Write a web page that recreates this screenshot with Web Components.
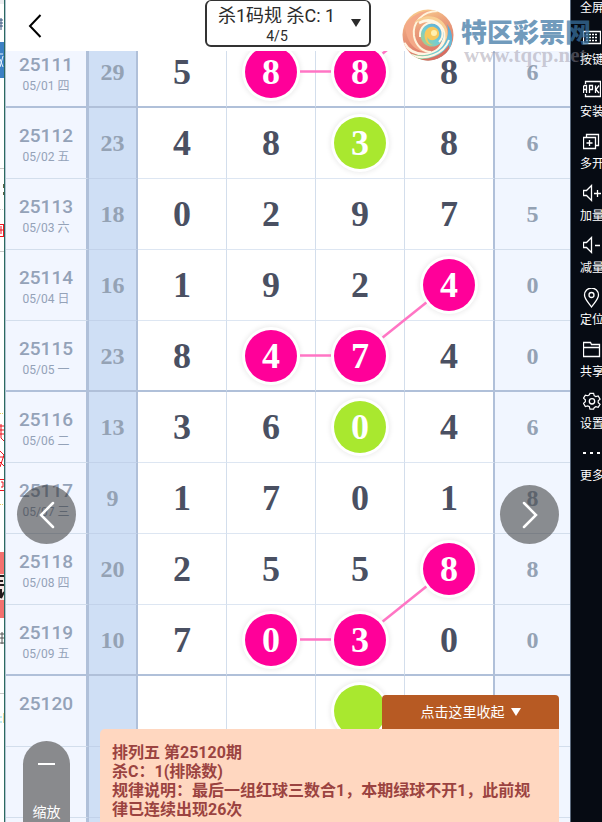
<!DOCTYPE html>
<html lang="zh-CN">
<head>
<meta charset="utf-8">
<meta name="viewport" content="width=device-width, initial-scale=1">
<title>排列五 走势</title>
<style>
  body {
    margin: 0;
    background: #fff;
    font-family: Roboto, "Noto Sans CJK SC", sans-serif;
  }
</style>
</head>
<body>
<trend-app></trend-app>

<script>
// strip of the desktop window that shows left of the emulator
class DesktopEdge extends HTMLElement {
  constructor() {
    super();
    this.attachShadow({ mode: 'open' });
  }

  connectedCallback() {
    this.shadowRoot.innerHTML = `
      <style>
        :host {
          display: block;
          flex: none;
          width: 4px;
          overflow: hidden;
          background: #fff;
          border-right: 1px solid #2b6a60;
        }
        svg { display: block; }
      </style>
      <svg width="4" height="822" viewBox="0 0 4 822" fill="none" aria-hidden="true">
        <path d="M0 0h4v4H0z" fill="#eceef1"/>
        <path d="M0 20h3M0 23h3M0 26h3M1 18v12" stroke="#35557f"/>
        <path d="M0 42h4v36H0z" fill="#3c80c4"/>
        <path d="M0 54h3M0 59l3 8M3 56l-3 11" stroke="#e8f3ff"/>
        <path d="M0 168.500h4M0 251.500h4M0 693.500h4" stroke="#c9c9c9"/>
        <path d="M3.500 184v4M3.500 192v3" stroke="#5d6145"/>
        <path d="M0 224.500h4M0 236.500h4M3.500 224v13M0 230h3M1 226v8" stroke="#f01420"/>
        <path d="M0 209.500h4" stroke="#cfcfcf" stroke-dasharray="1 1"/>
        <path d="M0 413.500h4M0 504.500h4" stroke="#e8c95c" stroke-dasharray="1 1"/>
        <path d="M0 426h4M0 430h4M0 434h4M1 424v14l3 3M0 451l4 4-4 12M0 457h4M0 462l4 4M0 479.500h4M0 490.500h4M1 482h2v5H1" stroke="#ee1520"/>
        <path d="M0 552h4v66H0z" fill="#f4716f"/>
        <path d="M0 574h4v26H0z" fill="#f7e6e4"/>
        <path d="M0 576h4M0 581h3M0 585h4M1 589v9l3-6" stroke="#221a1c" stroke-width="2"/>
        <path d="M0 634h4M0 638h4M0 643h4M2 632v12" stroke="#555"/>
        <path d="M0 717h2M0 722h2" stroke="#7fdcec"/>
        <path d="M3.500 713v10" stroke="#ecd79a"/>
      </svg>
    `;
  }
}

// top bar: back button and the rule picker
class TrendHeader extends HTMLElement {
  constructor() {
    super();
    this.attachShadow({ mode: 'open' });
  }

  connectedCallback() {
    this.shadowRoot.innerHTML = `
      <style>
        :host {
          display: grid;
          grid-template-columns: 1fr auto 1fr;
          align-items: start;
          height: 51px;
          background: #fff;
          position: relative;
          z-index: 1;
        }
        button {
          width: 48px;
          height: 51px;
          margin-left: 5px;
          padding: 0;
          border: 0;
          background: none;
        }
        button svg { display: block; margin: 0 auto; }
        .picker {
          display: grid;
          grid-template-columns: auto 12px;
          align-items: center;
          box-sizing: border-box;
          width: 166px;
          height: 47px;
          padding: 0 6px 0 11px;
          justify-content: space-between;
          border: 2px solid #333;
          border-top-width: 1px;
          border-radius: 6px;
          color: #2b2b2b;
          text-align: center;
        }
        select {
          display: block;
          appearance: none;
          margin: 0;
          padding: 0;
          border: 0;
          background: none;
          color: inherit;
          font: 18px/26px Roboto, "Noto Sans CJK SC", sans-serif;
        }
        .page { display: block; font-size: 14px; line-height: 14px; }
      </style>
      <button type="button" aria-label="返回">
        <svg width="14" height="24" viewBox="0 0 14 24" fill="none" stroke="#000" stroke-width="2">
          <path d="M12.500 1L2 12l10.500 11"/>
        </svg>
      </button>
      <label class="picker">
        <span>
          <select aria-label="规律">
            <option>杀1码规 杀C: 1</option>
          </select>
          <span class="page">4/5</span>
        </span>
        <svg width="10" height="8" viewBox="0 0 10 8" aria-hidden="true"><path d="M0 0h10L5 8z" fill="#2b2b2b"/></svg>
      </label>
    `;
  }
}

// coloured ball around a drawn digit, kind="red" or kind="green"
class NumberBall extends HTMLElement {
  constructor() {
    super();
    this.attachShadow({ mode: 'open' });
  }

  connectedCallback() {
    this.shadowRoot.innerHTML = `
      <style>
        :host {
          display: flex;
          align-items: center;
          justify-content: center;
          width: 52px;
          height: 52px;
          margin: 0 auto;
          border-radius: 50%;
          color: #fff;
          background: #ff0099;
          box-shadow: 0 0 0 3px #fff, 0 0 5px 4px rgba(0, 0, 0, .08);
        }
        :host([kind="green"]) { background: #a9e82f; }
      </style>
      <slot></slot>
    `;
  }
}

// link is [columns, rows] to the next red ball
const ROWS = [
  { issue: '25111', date: '05/01 四', sum: 29, nums: [5, 8, 8, 8], last: 6, red: { 1: [1, 0], 2: [1, -1] }, end: true },
  { issue: '25112', date: '05/02 五', sum: 23, nums: [4, 8, 3, 8], last: 6, green: 2 },
  { issue: '25113', date: '05/03 六', sum: 18, nums: [0, 2, 9, 7], last: 5 },
  { issue: '25114', date: '05/04 日', sum: 16, nums: [1, 9, 2, 4], last: 0, red: { 3: null } },
  { issue: '25115', date: '05/05 一', sum: 23, nums: [8, 4, 7, 4], last: 0, red: { 1: [1, 0], 2: [1, -1] }, end: true },
  { issue: '25116', date: '05/06 二', sum: 13, nums: [3, 6, 0, 4], last: 6, green: 2 },
  { issue: '25117', date: '05/07 三', sum: 9, nums: [1, 7, 0, 1], last: 8 },
  { issue: '25118', date: '05/08 四', sum: 20, nums: [2, 5, 5, 8], last: 8, red: { 3: null } },
  { issue: '25119', date: '05/09 五', sum: 10, nums: [7, 0, 3, 0], last: 0, red: { 1: [1, 0], 2: [1, -1] }, end: true },
  { issue: '25120', date: '', sum: '', nums: ['', '', '', ''], last: '', green: 2 },
  { issue: '', date: '', sum: '', nums: ['', '', '', ''], last: '' },
  { issue: '', date: '', sum: '', nums: ['', '', '', ''], last: '' },
];

class TrendTable extends HTMLElement {
  constructor() {
    super();
    this.attachShadow({ mode: 'open' });
  }

  connectedCallback() {
    this.render();
    this.drawLinks();
    new ResizeObserver(() => this.drawLinks()).observe(this);
  }

  cell(row, value, i) {
    if (row.red && i in row.red) {
      const link = row.red[i] ? `data-link="${row.red[i]}"` : '';
      return `<td><number-ball kind="red" ${link}>${value}</number-ball></td>`;
    }
    if (row.green === i) {
      return `<td><number-ball kind="green">${value}</number-ball></td>`;
    }
    return `<td>${value}</td>`;
  }

  drawLinks() {
    const svg = this.shadowRoot.querySelector('.links');
    const base = svg.getBoundingClientRect();
    const gap = 29;
    let lines = '';
    this.shadowRoot.querySelectorAll('[data-link]').forEach((ball) => {
      const box = ball.getBoundingClientRect();
      const td = ball.parentElement.getBoundingClientRect();
      const [cols, rows] = ball.dataset.link.split(',').map(Number);
      const x = box.left + box.width / 2 - base.left;
      const y = box.top + box.height / 2 - base.top;
      const dx = cols * td.width;
      const dy = rows * td.height;
      const len = Math.hypot(dx, dy);
      const ox = (dx / len) * gap;
      const oy = (dy / len) * gap;
      lines += `<line x1="${x + ox}" y1="${y + oy}" x2="${x + dx - ox}" y2="${y + dy - oy}"/>`;
    });
    svg.innerHTML = lines;
  }

  render() {
    const rows = ROWS.map((row) => `
      <tr class="${row.end ? 'end' : ''}">
        <th scope="row"><span class="issue">${row.issue}</span><span class="date">${row.date}</span></th>
        <td class="sum">${row.sum}</td>
        ${row.nums.map((n, i) => this.cell(row, n, i)).join('')}
        <td class="last">${row.last}</td>
      </tr>`).join('');

    this.shadowRoot.innerHTML = `
      <style>
        :host {
          display: block;
          position: relative;
          margin-top: -14px;
        }
        table {
          width: 100%;
          table-layout: fixed;
          border-collapse: separate;
          border-spacing: 0;
          background: #fff;
        }
        td, th {
          box-sizing: border-box;
          height: 71px;
          padding: 0;
          border-right: 1px solid #d3deec;
          border-bottom: 1px solid #dde6f2;
          text-align: center;
        }
        td {
          color: #4a5062;
          font: bold 36px/40px "Liberation Serif", serif;
        }
        th {
          padding-top: 16px;
          vertical-align: top;
          background: #f2f6ff;
          border-right: 3px solid #b0c0d9;
          border-bottom-color: #d3deec;
          color: #94a2b8;
          font-weight: 500;
        }
        .issue { display: block; font-size: 19px; line-height: 24px; }
        .date { display: block; font-size: 12px; font-weight: 400; line-height: 18px; }
        td.sum, td.last {
          color: #94a2b4;
          font-size: 24px;
        }
        td.sum {
          background: #cfdff5;
          border-right: 2px solid #b0c0d9;
          border-bottom-color: #c2d2ea;
        }
        td.last {
          background: #f1f6ff;
          border-right: 0;
          border-bottom-color: #d3deec;
        }
        td:nth-child(6) { border-right: 2px solid #b0c0d9; }
        tr.end > td, tr.end > th { border-bottom: 2px solid #b0c0d9; }
        .links {
          position: absolute;
          inset: 0;
          width: 100%;
          height: 100%;
          stroke: #ff75c4;
          stroke-width: 2.5;
        }
      </style>
      <table>
        <colgroup>
          <col style="width: 83px"><col style="width: 49px">
          <col style="width: 89px"><col style="width: 89px"><col style="width: 89px"><col style="width: 90px">
          <col style="width: 75px">
        </colgroup>
        <tbody>${rows}</tbody>
      </table>
      <svg class="links" aria-hidden="true"></svg>
    `;
  }
}

class RoundNav extends HTMLElement {
  constructor() {
    super();
    this.attachShadow({ mode: 'open' });
  }

  connectedCallback() {
    const next = this.getAttribute('dir') === 'next';
    this.shadowRoot.innerHTML = `
      <style>
        :host { display: block; }
        button {
          display: flex;
          align-items: center;
          justify-content: center;
          width: 59px;
          height: 59px;
          padding: 0;
          border: 0;
          border-radius: 50%;
          background: rgba(45, 45, 45, .53);
        }
      </style>
      <button type="button" aria-label="${next ? '下一个' : '上一个'}">
        <svg width="16" height="28" viewBox="0 0 16 28" fill="none" stroke="#fff" stroke-width="2.500" stroke-linecap="round">
          <path d="${next ? 'M2 2l12 12L2 26' : 'M14 2L2 14l12 12'}"/>
        </svg>
      </button>
    `;
  }
}

class ZoomPill extends HTMLElement {
  constructor() {
    super();
    this.attachShadow({ mode: 'open' });
  }

  connectedCallback() {
    this.shadowRoot.innerHTML = `
      <style>
        :host { display: block; }
        button {
          display: flex;
          flex-direction: column;
          align-items: center;
          justify-content: space-between;
          width: 47px;
          height: 81px;
          padding: 22px 0 0;
          border: 0;
          border-radius: 24px 24px 0 0;
          background: #898a8d;
          color: #fff;
          font: 14px/20px Roboto, "Noto Sans CJK SC", sans-serif;
        }
        i { width: 17px; height: 2px; background: #fff; }
      </style>
      <button type="button"><i></i>缩放</button>
    `;
  }
}

// notice docked to the bottom of the screen
class RuleNotice extends HTMLElement {
  constructor() {
    super();
    this.attachShadow({ mode: 'open' });
  }

  connectedCallback() {
    this.shadowRoot.innerHTML = `
      <style>
        :host {
          display: flex;
          flex-direction: column;
          align-items: flex-end;
        }
        button {
          display: flex;
          align-items: center;
          justify-content: center;
          gap: 6px;
          width: 177px;
          height: 34px;
          padding: 0;
          border: 0;
          border-radius: 4px 4px 0 0;
          background: #b75a23;
          color: #fff;
          font: 14px/20px Roboto, "Noto Sans CJK SC", sans-serif;
        }
        .body {
          box-sizing: border-box;
          width: 100%;
          padding: 14px 18px 3px 12px;
          border-radius: 5px 0 0 0;
          background: #ffd7c0;
          color: #9b4340;
          font-weight: 700;
          font-size: 16px;
          line-height: 19px;
        }
      </style>
      <button type="button">点击这里收起
        <svg width="10" height="8" viewBox="0 0 10 8" aria-hidden="true"><path d="M0 0h10L5 8z" fill="#fff"/></svg>
      </button>
      <div class="body"><slot></slot></div>
    `;
  }
}

class SiteMark extends HTMLElement {
  constructor() {
    super();
    this.attachShadow({ mode: 'open' });
  }

  connectedCallback() {
    this.shadowRoot.innerHTML = `
      <style>
        :host {
          display: flex;
          align-items: flex-start;
          gap: 7px;
          pointer-events: none;
          white-space: nowrap;
        }
        svg { display: block; }
        .name {
          display: block;
          margin-top: 7px;
          color: rgba(58, 116, 163, .72);
          font: 900 26px/30px "Noto Sans CJK SC", sans-serif;
        }
        .url {
          display: block;
          margin-left: 3px;
          color: rgba(150, 145, 160, .45);
          font: bold 21px/18px "Liberation Serif", serif;
        }
      </style>
      <svg width="52" height="52" viewBox="0 0 52 52" fill="none" aria-hidden="true">
        <defs>
          <clipPath id="disc"><circle cx="26" cy="26" r="25.500"/></clipPath>
          <linearGradient id="rim" x1=".3" y1="0" x2=".6" y2="1">
            <stop offset="0" stop-color="#f9cf8c"/><stop offset=".35" stop-color="#eb9f7c"/><stop offset="1" stop-color="#d96f64"/>
          </linearGradient>
          <linearGradient id="sea" x1="1" y1="0" x2="0" y2="1">
            <stop offset="0" stop-color="#5aa6d6"/><stop offset=".55" stop-color="#71cdd6"/><stop offset="1" stop-color="#b9cf72"/>
          </linearGradient>
        </defs>
        <g clip-path="url(#disc)">
          <path d="M0 0h52v52H0z" fill="url(#rim)"/>
          <path d="M3 16C10 4 26-1 36 3C23 3 12 12 12 24C12 34 18 41 26 43C12 43 4 32 3 16z" fill="#f4a988"/>
          <path d="M36 2C20 2 10 14 12 27C14 38 22 43 29 43" stroke="#fff4dc" stroke-width="2"/>
          <path d="M12 14C22 3 40 6 45 20C48 32 41 42 32 44C40 38 43 29 38 20C32 11 21 9 12 14z" fill="#f9cf94"/>
          <path d="M17 14C30 7 43 16 42 29C41 38 34 44 25 45C14 46 6 41 2 34" stroke="#fff6e4" stroke-width="3"/>
          <path d="M2 42C17 50 35 46 42 35C46 29 47 22 45 15C52 24 52 37 44 45C32 55 12 54 2 42z" fill="url(#sea)"/>
          <path d="M9 46C24 52 42 45 47 31" stroke="#fff6e4" stroke-width="2"/>
          <path d="M18 50C29 51 41 45 47 36C49 44 37 53 26 53z" fill="#d96d60"/>
          <circle cx="30" cy="26" r="11.500" fill="url(#sea)"/>
          <path d="M18 28C17 18 25 12 33 14C41 17 43 27 37 33" stroke="#fff6e4" stroke-width="2"/>
          <path d="M23 30C21 22 26 17 32 18C38 20 39 27 34 30C29 33 24 30 26 25C25 30 25 34 31 36C26 36 24 33 23 30z" fill="#f8c85c"/>
          <circle cx="32" cy="24" r="3" fill="#fff0b0"/>
        </g>
      </svg>
      <span><span class="name">特区彩票网</span><span class="url">www.tqcp.net</span></span>
    `;
  }
}

const TOOLS = [
  ['全屏', ''],
  ['按键', '<path d="M.5 3.500h17v12H.500z"/><path d="M3 6.500h12M3 9.500h12M3 12.500h12" stroke-dasharray="2 1"/>'],
  ['安装', '<path d="M2.500 4V1.500h15v15h-15V14M.500 13V6.500l1-1h2v7.500M.500 9.500h3M6.500 13V5.500h3v4h-3M12.500 5.500V13M16 5.500l-3 4 3 3.500"/>'],
  ['多开', '<path d="M.500 5.500h12v11H.500zM3.500 5V2.500h12v11H13M3.500 11h6M6.500 8v6"/>'],
  ['加量', '<path d="M.500 6.500h3l5-5v15l-5-5h-3zM11 9.500h7M14.500 6v7"/>'],
  ['减量', '<path d="M.500 6.500h3l5-5v15l-5-5h-3zM12 9.500h5"/>'],
  ['定位', '<path d="M8.500 19C5 14 1.500 11 1.500 7a7 7 0 0 1 14 0c0 4-3.500 7-7 12z"/><circle cx="8.500" cy="7" r="2.500"/>'],
  ['共享', '<path d="M.500 16.500v-14h7l1 2h8v12zM.500 7.500h16"/>'],
  ['设置', '<path d="M7 1h4l.6 2.500 1.800 1 2.600-.7 2 3.400-2 1.800v2l2 1.800-2 3.400-2.600-.7-1.800 1L11 18H7l-.6-2.500-1.800-1-2.600.7-2-3.400L2 10V8L0 6.200l2-3.400 2.600.7 1.800-1z" transform="translate(.5 .5) scale(.92)"/><circle cx="9" cy="9.300" r="2.700"/>'],
  ['更多', '<path d="M0 9h3M7 9h3M14 9h3" stroke-width="2"/>'],
];

// emulator toolbar on the right, cut off by the window edge
class ToolRail extends HTMLElement {
  constructor() {
    super();
    this.attachShadow({ mode: 'open' });
  }

  connectedCallback() {
    const items = TOOLS.map(([label, icon]) => `
      <button type="button">
        ${icon ? `<svg width="18" height="20" viewBox="0 0 18 20" fill="none" stroke="#fff" stroke-width="1.300" aria-hidden="true">${icon}</svg>` : ''}
        <span>${label}</span>
      </button>`).join('');

    this.shadowRoot.innerHTML = `
      <style>
        :host {
          display: block;
          flex: none;
          width: 31px;
          overflow: hidden;
          background: #060b13;
        }
        button {
          display: flex;
          flex-direction: column;
          align-items: center;
          justify-content: flex-end;
          gap: 4px;
          width: 42px;
          height: 52px;
          padding: 0;
          border: 0;
          background: none;
          color: #fff;
          font: 12px/14px "Noto Sans CJK SC", sans-serif;
        }
        button:first-of-type { height: 14px; }
      </style>
      ${items}
    `;
  }
}

class TrendApp extends HTMLElement {
  constructor() {
    super();
    this.attachShadow({ mode: 'open' });
  }

  connectedCallback() {
    this.shadowRoot.innerHTML = `
      <style>
        :host {
          display: flex;
          position: relative;
          height: 100vh;
          overflow: hidden;
        }
        main {
          flex: 1;
          min-width: 0;
          position: relative;
          overflow: hidden;
          border-left: 1px solid #b3c4d2;
          border-right: 1px solid #5b6a7c;
        }
        .prev, .next { position: absolute; top: 485px; z-index: 2; }
        .prev { left: 11px; }
        .next { right: 11px; }
        zoom-pill { position: absolute; left: 17px; bottom: 0; z-index: 2; }
        rule-notice { position: absolute; left: 94px; right: 11px; bottom: 0; z-index: 2; }
        site-mark { position: absolute; right: 11px; top: 9px; z-index: 3; }
      </style>
      <desktop-edge></desktop-edge>
      <main>
        <trend-header></trend-header>
        <trend-table></trend-table>
        <round-nav class="prev" dir="prev"></round-nav>
        <round-nav class="next" dir="next"></round-nav>
        <zoom-pill></zoom-pill>
        <rule-notice>
          <div>排列五 第25120期</div>
          <div>杀C：1(排除数)</div>
          <div>规律说明：最后一组红球三数合1，本期绿球不开1，此前规律已连续出现26次</div>
        </rule-notice>
      </main>
      <tool-rail></tool-rail>
      <site-mark></site-mark>
    `;
  }
}

customElements.define('desktop-edge', DesktopEdge);
customElements.define('trend-header', TrendHeader);
customElements.define('number-ball', NumberBall);
customElements.define('trend-table', TrendTable);
customElements.define('round-nav', RoundNav);
customElements.define('zoom-pill', ZoomPill);
customElements.define('rule-notice', RuleNotice);
customElements.define('site-mark', SiteMark);
customElements.define('tool-rail', ToolRail);
customElements.define('trend-app', TrendApp);
</script>
</body>
</html>
